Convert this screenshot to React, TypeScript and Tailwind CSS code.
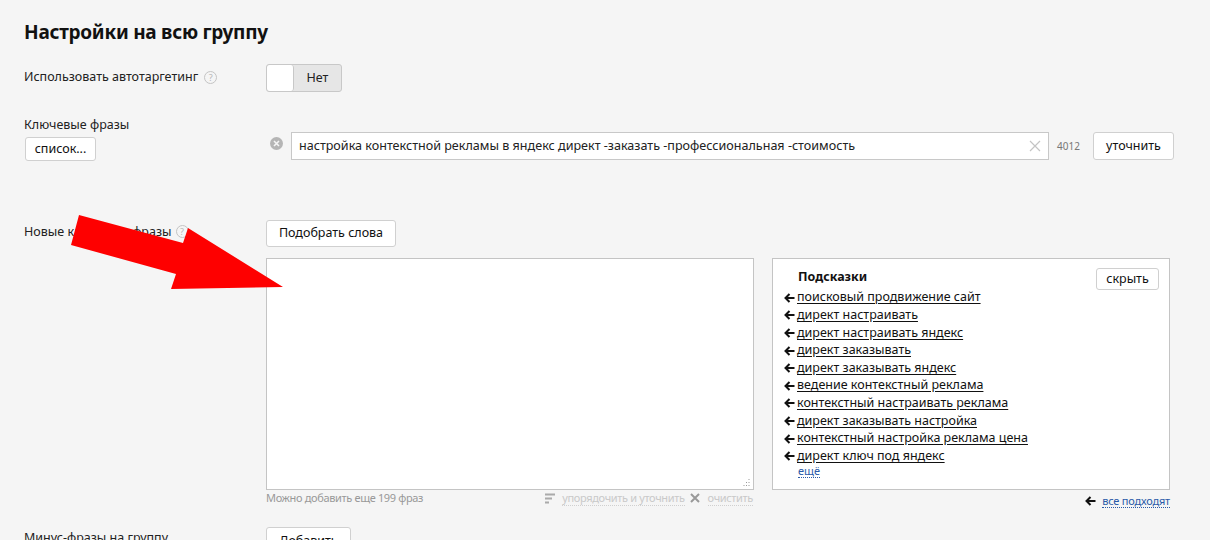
import React from 'react';

const hints = [
  'поисковый продвижение сайт',
  'директ настраивать',
  'директ настраивать яндекс',
  'директ заказывать',
  'директ заказывать яндекс',
  'ведение контекстный реклама',
  'контекстный настраивать реклама',
  'директ заказывать настройка',
  'контекстный настройка реклама цена',
  'директ ключ под яндекс',
];

const btn = 'flex items-center justify-center rounded-[3px] border border-[#d0d0d0] bg-white text-[12.5px] text-[#111]';

const ArrowLeft = () => (
  <svg width="11" height="10" viewBox="0 0 11 10" className="shrink-0">
    <path d="M10.5 5H2M5.5 1 1.5 5l4 4" fill="none" stroke="#111" strokeWidth="2" />
  </svg>
);

const Help = () => (
  <span className="flex h-[13px] w-[13px] items-center justify-center rounded-full border border-[#c4c4c4] text-[9px] leading-none text-[#b5b5b5]">
    ?
  </span>
);

const App = () => {
  return (
    <div className="relative h-[540px] w-[1210px] overflow-hidden bg-[#f5f5f5] pl-[24px] font-['Noto_Sans','Open_Sans',sans-serif] text-[12.5px] text-[#222]">
      <h1 className="pt-[19px] text-[19px] font-bold leading-[27px] tracking-[-0.25px] text-[#111]">Настройки на всю группу</h1>

      <div className="mt-[18px] flex h-[28px]">
        <div className="flex w-[242px] items-center gap-[6px] pb-[2px]">
          <span>Использовать автотаргетинг</span>
          <Help />
        </div>
        <div className="flex h-[28px] w-[76px] overflow-hidden rounded-[3px] border border-[#c8c8c8] bg-[#e6e6e6]">
          <div className="w-[27px] rounded-[3px] border-r border-[#c8c8c8] bg-white" />
          <div className="flex flex-1 items-center justify-center text-[#222]">Нет</div>
        </div>
      </div>

      <div className="mt-[23px] flex h-[57px]">
        <div className="w-[242px]">
          <div className="h-[19px] leading-[19px]">Ключевые фразы</div>
          <button className={`${btn} mt-[3px] ml-[1px] h-[24px] w-[71px]`}>список...</button>
        </div>
        <div className="mt-[17px] flex h-[28px] items-start">
          <span className="mt-[5px] ml-[4px] flex h-[13px] w-[13px] items-center justify-center rounded-full bg-[#b5b5b5]">
            <svg width="7" height="7" viewBox="0 0 7 7">
              <path d="M1 1l5 5M6 1 1 6" stroke="#f5f5f5" strokeWidth="1.6" />
            </svg>
          </span>
          <div className="ml-[8px] flex h-[28px] w-[758px] items-center justify-between border border-[#c8c8c8] bg-white pr-[7px] pl-[7px]">
            <span className="text-[12.57px]">настройка контекстной рекламы в яндекс директ -заказать -профессиональная -стоимость</span>
            <svg width="12" height="12" viewBox="0 0 12 12">
              <path d="M1 1l10 10M11 1 1 11" stroke="#c4c4c4" strokeWidth="1.2" />
            </svg>
          </div>
          <span className="mt-[7px] ml-[8px] w-[36px] text-[10px] text-[#777]">4012</span>
          <button className={`${btn} h-[28px] w-[81px]`}>уточнить</button>
        </div>
      </div>

      <div className="mt-[48px] flex">
        <div className="flex w-[242px] items-start gap-[4px] pt-[3px]">
          <span>Новые ключевые фразы</span>
          <span className="mt-[2px]">
            <Help />
          </span>
        </div>
        <div>
          <button className={`${btn} h-[27px] w-[130px]`}>Подобрать слова</button>
          <div className="mt-[11px] flex gap-[18px]">
            <div>
              <div className="relative h-[232px] w-[488px] border border-[#c4c4c4] bg-white">
                <svg width="8" height="8" viewBox="0 0 8 8" className="absolute right-[3px] bottom-[3px]">
                  <path d="M7 1v1M4.500 4v1M7 4v1M2 7v1M4.500 7v1M7 7v1" stroke="#999" strokeWidth="1" />
                </svg>
              </div>
              <div className="flex h-[16px] w-[488px] items-center justify-between text-[11px] tracking-[-0.35px] text-[#999]">
                <span>Можно добавить еще 199 фраз</span>
                <div className="flex items-center pr-[1px] text-[#c9c9c9]">
                  <svg width="11" height="11" viewBox="0 0 11 11" className="mr-[6px]">
                    <path d="M0 1.500h10M0 5.500h7M0 9.500h4" stroke="#aaa" strokeWidth="2" />
                  </svg>
                  <span className="border-b border-dotted border-[#d0d0d0] leading-[14px]">упорядочить и уточнить</span>
                  <svg width="10" height="10" viewBox="0 0 10 10" className="mr-[8px] ml-[5px]">
                    <path d="M1 1l8 8M9 1 1 9" stroke="#999" strokeWidth="2" />
                  </svg>
                  <span className="border-b border-dotted border-[#d0d0d0] leading-[14px]">очистить</span>
                </div>
              </div>
            </div>
            <div>
              <div className="relative h-[232px] w-[398px] border border-[#c4c4c4] bg-white pt-[9px] pl-[11px]">
                <div className="pl-[14px] text-[12.5px] font-bold leading-[18px] text-[#111]">Подсказки</div>
                <button className={`${btn} absolute top-[9px] right-[10px] h-[22px] w-[63px]`}>скрыть</button>
                <ul className="mt-[3px]">
                  {hints.map((hint) => (
                    <li key={hint} className="flex h-[17.6px] items-center gap-[2px] text-[12.5px] text-[#111]">
                      <ArrowLeft />
                      <span className="underline underline-offset-2">{hint}</span>
                    </li>
                  ))}
                </ul>
                <a className="ml-[14px] block w-fit border-b border-dotted border-[#2a5aa8] text-[11px] leading-[12px] text-[#2a5aa8]">ещё</a>
              </div>
              <div className="mt-[3px] flex h-[16px] items-center justify-end gap-[6px] text-[11px] tracking-[-0.2px] text-[#2a5aa8]">
                <ArrowLeft />
                <span className="border-b border-dotted border-[#2a5aa8] leading-[13px]">все подходят</span>
              </div>
            </div>
          </div>
        </div>
      </div>

      <div className="mt-[18px] flex">
        <div className="w-[242px] pt-[2px]">Минус-фразы на группу</div>
        <button className={`${btn} h-[28px] w-[85px]`}>Добавить</button>
      </div>

      <svg width="1210" height="540" className="pointer-events-none absolute top-0 left-0">
        <polygon points="79,215 71,245 176,274 171,289 283,287 188,228 183,243" fill="#fe0000" />
      </svg>
    </div>
  );
};

export default App;
